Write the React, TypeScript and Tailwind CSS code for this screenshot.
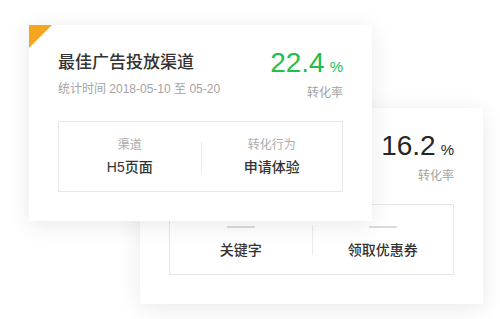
const font = { fontFamily: '"Liberation Sans", "Noto Sans CJK SC", sans-serif' };

function Card({
  rate,
  green,
  showHeader,
  items,
  corner,
}: {
  rate: string;
  green?: boolean;
  showHeader?: boolean;
  items: { label?: string; value: string }[];
  corner?: boolean;
}) {
  return (
    <div className="relative w-[343px] h-[196px] bg-white shadow-[0_4px_22px_rgba(0,0,0,0.09)] overflow-hidden">
      {corner && (
        <div className="absolute left-0 top-0 w-0 h-0 border-t-[23px] border-r-[23px] border-t-[#f7a520] border-r-transparent" />
      )}
      <div className="flex justify-between items-start px-[29px] pt-[25px] h-[96px]">
        <div className={showHeader ? "" : "invisible"}>
          <div className="text-[17px] leading-[26px] font-medium text-[#333]">最佳广告投放渠道</div>
          <div className="text-[12px] leading-[18px] mt-[4px] text-[#a3a3a3]">统计时间 2018-05-10 至 05-20</div>
        </div>
        <div className="flex flex-col items-end">
          <div className={`leading-[30px] -mt-[2px] ${green ? "text-[#21bf4b]" : "text-[#262626]"}`}>
            <span className="text-[28px]">{rate}</span>
            <span className="text-[15px] ml-[5px]">%</span>
          </div>
          <div className="text-[12px] leading-[18px] mt-[2px] text-[#a3a3a3]">转化率</div>
        </div>
      </div>
      <div className="mx-[29px] h-[71px] border border-[#e6e6e6] flex items-center">
        {items.map((it, i) => (
          <div key={i} className="flex-1 flex items-center">
            {i > 0 && <div className="w-px h-[30px] bg-[#ececec]" />}
            <div className="flex-1 flex flex-col items-center">
              {it.label ? (
                <div className="text-[12px] leading-[18px] text-[#ababab]">{it.label}</div>
              ) : (
                <div className="h-[18px] flex items-center">
                  <div className="w-[28px] h-[2px] bg-[#dcdcdc] mb-[2px]" />
                </div>
              )}
              <div className="text-[14px] leading-[20px] mt-[3px] font-medium text-[#333]">{it.value}</div>
            </div>
          </div>
        ))}
      </div>
    </div>
  );
}

export default function App() {
  return (
    <div className="relative w-[500px] h-[319px] bg-white overflow-hidden" style={font}>
      <div className="pl-[140px] pt-[108px]">
        <Card rate="16.2" items={[{ value: "关键字" }, { value: "领取优惠券" }]} />
      </div>
      <div className="absolute left-[29px] top-[25px]">
        <Card
          rate="22.4"
          green
          showHeader
          corner
          items={[
            { label: "渠道", value: "H5页面" },
            { label: "转化行为", value: "申请体验" },
          ]}
        />
      </div>
    </div>
  );
}
